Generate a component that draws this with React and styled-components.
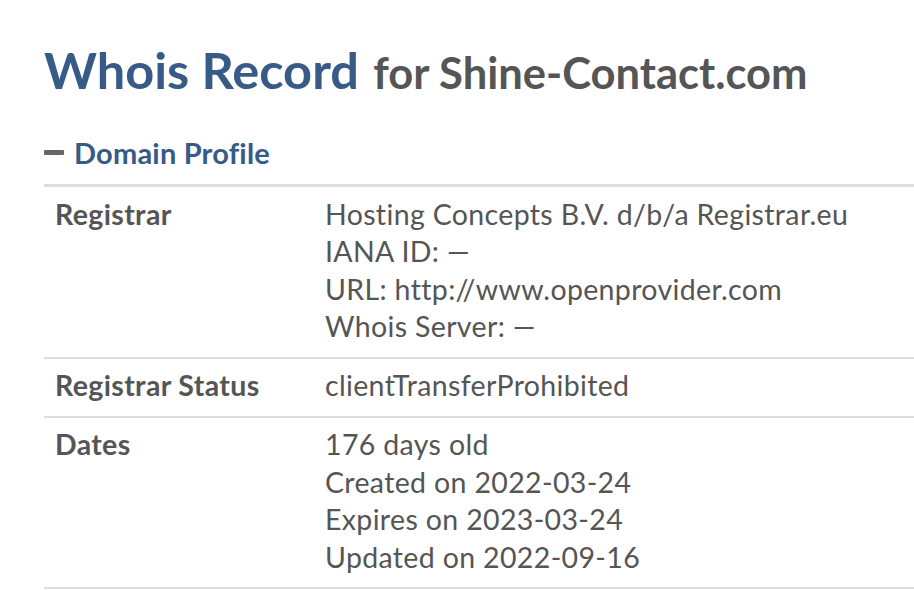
import React from "react";
import styled, { createGlobalStyle } from "styled-components";

const GlobalStyle = createGlobalStyle`
  html, body {
    margin: 0;
    padding: 0;
    background: #fff;
    font-family: Lato, "Open Sans", sans-serif;
    overflow: hidden;
  }
`;

const Page = styled.div`
  padding: 38px 0 0 44px;
  width: 914px;
  box-sizing: border-box;
`;

const Title = styled.h1`
  margin: 0;
  font-size: 50.5px;
  font-weight: 700;
  color: #375a87;
  line-height: 64px;
`;

const Sub = styled.span`
  font-size: 43.5px;
  color: #555;
  margin-left: 2px;
`;

const SectionHead = styled.div`
  display: flex;
  align-items: center;
  gap: 10px;
  margin-top: 31px;
  font-size: 29px;
  font-weight: 700;
  color: #375a87;
  height: 34px;
  letter-spacing: 0.2px;
`;

const Dash = styled.span`
  width: 20px;
  height: 5px;
  background: #666;
  border-radius: 1px;
`;

const Table = styled.div`
  margin-top: 15px;
  border-top: 3px solid #ddd;
`;

const Row = styled.div`
  display: grid;
  grid-template-columns: 270px 1fr;
  padding: 8.5px 0 11px 11px;
  border-bottom: 2px solid #ddd;
  font-size: 28.5px;
  line-height: 37.5px;
  color: #555;
  letter-spacing: 0.35px;
`;

const Label = styled.div`
  font-weight: 700;
`;

const Lines = styled.div`
  display: flex;
  flex-direction: column;
`;

const rows = [
  {
    label: "Registrar",
    lines: [
      "Hosting Concepts B.V. d/b/a Registrar.eu",
      "IANA ID: \u2014",
      "URL: http://www.openprovider.com",
      "Whois Server: \u2014",
    ],
  },
  { label: "Registrar Status", lines: ["clientTransferProhibited"] },
  {
    label: "Dates",
    lines: [
      "176 days old",
      "Created on 2022-03-24",
      "Expires on 2023-03-24",
      "Updated on 2022-09-16",
    ],
  },
];

const App = () => (
  <Page>
    <GlobalStyle />
    <Title>
      Whois Record <Sub>for Shine-Contact.com</Sub>
    </Title>
    <SectionHead>
      <Dash />
      Domain Profile
    </SectionHead>
    <Table>
      {rows.map((r) => (
        <Row key={r.label}>
          <Label>{r.label}</Label>
          <Lines>
            {r.lines.map((l) => (
              <span key={l}>{l}</span>
            ))}
          </Lines>
        </Row>
      ))}
    </Table>
  </Page>
);

export default App;
